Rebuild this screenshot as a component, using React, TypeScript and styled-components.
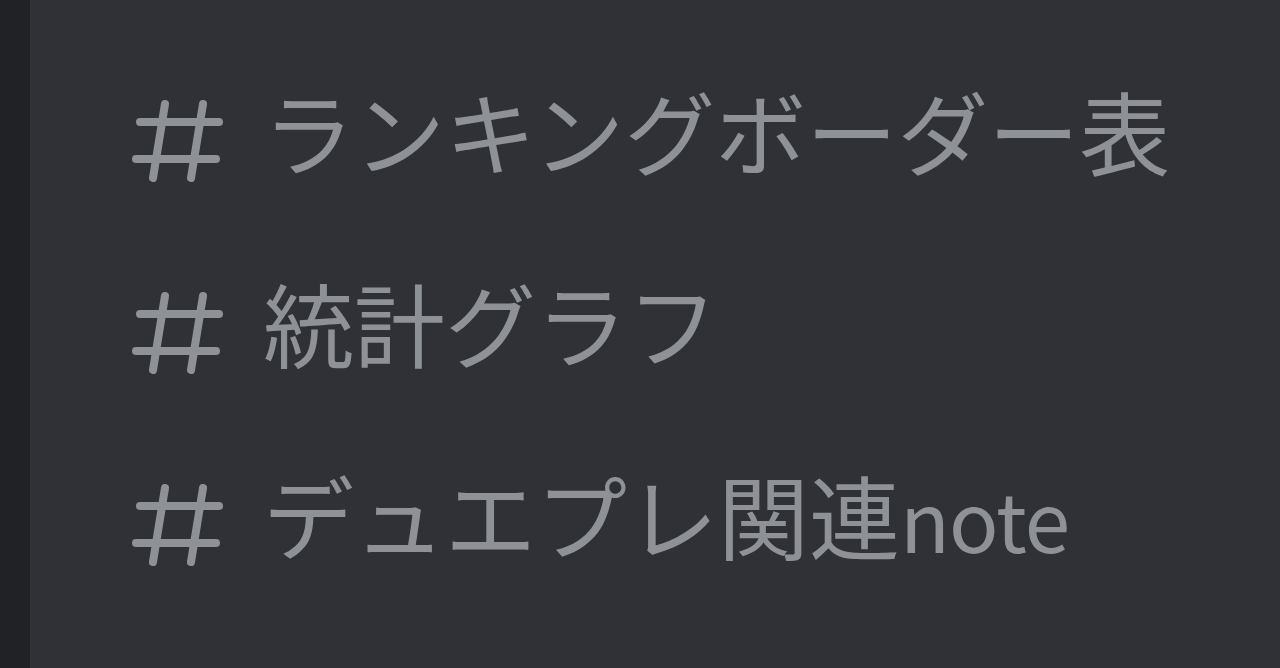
import React from "react";
import styled, { createGlobalStyle } from "styled-components";

const GlobalStyle = createGlobalStyle`
  html, body {
    margin: 0;
    padding: 0;
    height: 100%;
    background: #2f3136;
  }
  #root {
    height: 100%;
  }
`;

const Layout = styled.div`
  display: flex;
  width: 1280px;
  height: 668px;
  overflow: hidden;
  background: #2f3136;
`;

const GuildRail = styled.div`
  width: 30px;
  flex-shrink: 0;
  background: #212226;
`;

const ChannelList = styled.ul`
  list-style: none;
  margin: 0;
  padding: 46px 0 0 100px;
  flex: 1;
  display: flex;
  flex-direction: column;
`;

const Channel = styled.li`
  display: flex;
  align-items: center;
  gap: 37px;
  height: 192px;
  color: #8e9297;
  font-family: "Noto Sans CJK JP", "Noto Sans", sans-serif;
  font-size: 91px;
  line-height: 1;
  white-space: nowrap;
  cursor: pointer;
`;

const HashIcon = styled.svg`
  width: 96px;
  height: 88px;
  flex-shrink: 0;
`;

const ChannelName = styled.span`
  display: block;
  margin-bottom: 26px;
`;

// latin runs in the name sit a little smaller than the kana
const Latin = styled.span`
  font-size: 0.9em;
  letter-spacing: -1px;
`;

const Hash = () => (
  <HashIcon viewBox="0 0 96 88" fill="none" stroke="currentColor" strokeWidth={8} strokeLinecap="round">
    <line x1="35" y1="6" x2="23" y2="80" />
    <line x1="73" y1="6" x2="61" y2="80" />
    <line x1="10" y1="24" x2="89" y2="24" />
    <line x1="6" y1="61" x2="86" y2="61" />
  </HashIcon>
);

const channels = [
  { id: "border", name: "ランキングボーダー表" },
  { id: "stats", name: "統計グラフ" },
  { id: "notes", name: "デュエプレ関連", suffix: "note" },
];

export default function App() {
  return (
    <>
      <GlobalStyle />
      <Layout>
        <GuildRail />
        <ChannelList>
          {channels.map((ch) => (
            <Channel key={ch.id}>
              <Hash />
              <ChannelName>
                {ch.name}
                {ch.suffix && <Latin>{ch.suffix}</Latin>}
              </ChannelName>
            </Channel>
          ))}
        </ChannelList>
      </Layout>
    </>
  );
}
